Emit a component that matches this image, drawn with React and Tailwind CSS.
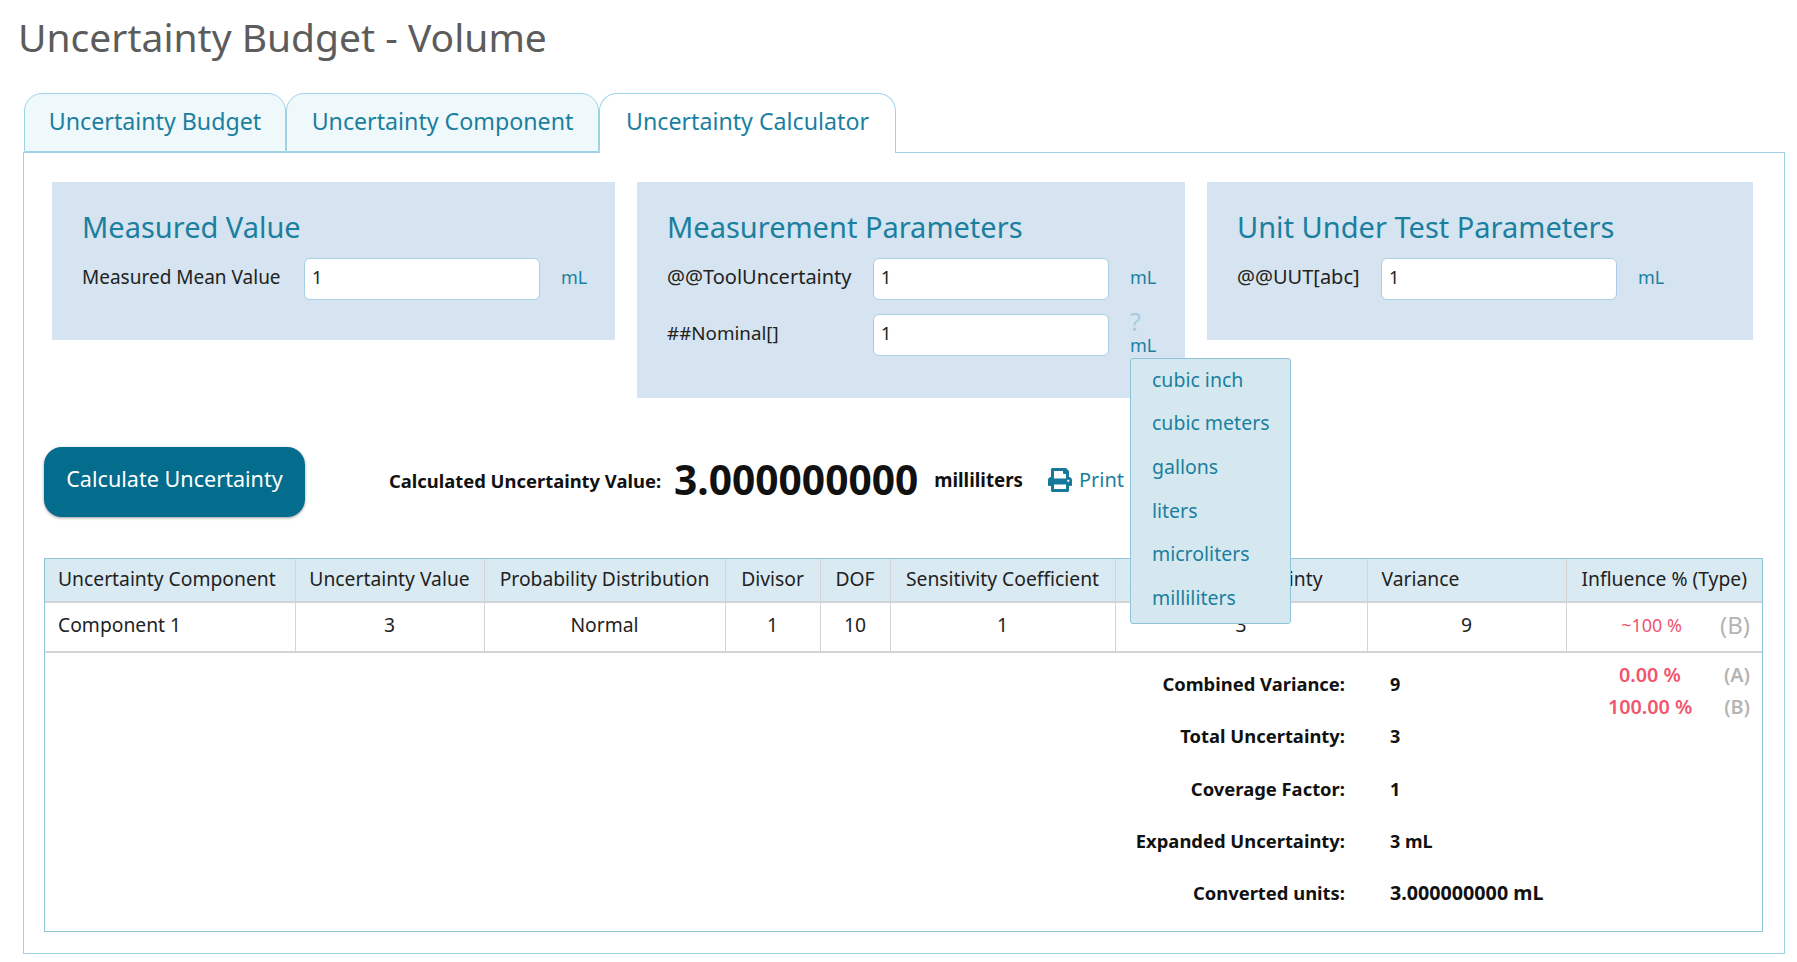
import React from 'react';
import { FaPrint } from 'react-icons/fa';

const units = ['cubic inch', 'cubic meters', 'gallons', 'liters', 'microliters', 'milliliters'];

const columns = [
  { name: 'Uncertainty Component', width: 'w-[250px]', value: 'Component 1', left: true },
  { name: 'Uncertainty Value', width: 'w-[189px]', value: '3' },
  { name: 'Probability Distribution', width: 'w-[241px]', value: 'Normal' },
  { name: 'Divisor', width: 'w-[95px]', value: '1' },
  { name: 'DOF', width: 'w-[70px]', value: '10' },
  { name: 'Sensitivity Coefficient', width: 'w-[225px]', value: '1' },
  { name: 'Standard Uncertainty', width: 'w-[252px]', value: '3', headLeft: true },
  { name: 'Variance', width: 'w-[199px]', value: '9', headLeft: true },
];

const summary = [
  ['Combined Variance:', '9'],
  ['Total Uncertainty:', '3'],
  ['Coverage Factor:', '1'],
  ['Expanded Uncertainty:', '3 mL'],
  ['Converted units:', '3.000000000 mL'],
];

function Field({ label, labelWidth, labelSize, hint }) {
  return (
    <div className="flex items-center h-[42px]">
      <label className={`${labelWidth} ${labelSize} shrink-0 text-[#222] relative -top-[2px]`}>{label}</label>
      <input
        defaultValue="1"
        className="w-[236px] h-[42px] rounded-[6px] bg-white border border-[#a9cfe2] pl-[7px] pb-[4px] text-[18px] text-[#222] outline-none"
      />
      <div className="ml-[21px] flex flex-col items-start text-[18px] leading-[24px] text-[#1b7f9f] relative -top-[2px]">
        {hint && <span className="text-[25px] leading-[24px] text-[#a5ccdc]">?</span>}
        <span>mL</span>
      </div>
    </div>
  );
}

function ParamBox({ title, width, height, children }) {
  return (
    <section className={`${width} ${height} shrink-0 bg-[#d5e4f0] pl-[30px] pt-[26px]`}>
      <h2 className="text-[29px] leading-[38px] text-[#1b7f9f] mb-[12px]">{title}</h2>
      <div className="flex flex-col gap-[14px]">{children}</div>
    </section>
  );
}

function Tab({ children, active, width }) {
  return (
    <div
      className={`${width} flex items-center justify-center rounded-t-[18px] border border-[#9ed3e6] text-[23.2px] text-[#1b7f9f] ${
        active ? 'bg-white border-b-0 h-[60px] -mb-[1px] pb-[5px] z-10' : 'h-[59px] pb-[3px] bg-[#eff8fb]'
      }`}
    >
      {children}
    </div>
  );
}

export default function App() {
  return (
    <div className="w-[1797px] h-[962px] bg-white font-['Noto_Sans',sans-serif] overflow-hidden">
      <h1 className="pl-[18px] pt-[13px] h-[93px] text-[39px] leading-[48px] text-[#5c5c5c]">Uncertainty Budget - Volume</h1>

      <div className="flex pl-[24px]">
        <Tab width="w-[262px]">Uncertainty Budget</Tab>
        <Tab width="w-[313px]">Uncertainty Component</Tab>
        <Tab width="w-[297px]" active>Uncertainty Calculator</Tab>
      </div>

      <main className="relative ml-[23px] w-[1762px] h-[802px] border border-[#9ed3e6] pt-[29px]">
        <div className="flex gap-[22px] pl-[28px] items-start">
          <ParamBox title="Measured Value" width="w-[563px]" height="h-[158px]">
            <Field label="Measured Mean Value" labelWidth="w-[222px]" labelSize="text-[19px]" />
          </ParamBox>
          <ParamBox title="Measurement Parameters" width="w-[548px]" height="h-[216px]">
            <Field label="@@ToolUncertainty" labelWidth="w-[206px]" labelSize="text-[20px]" />
            <Field label="##Nominal[]" labelWidth="w-[206px]" labelSize="text-[18.8px]" hint />
          </ParamBox>
          <ParamBox title="Unit Under Test Parameters" width="w-[546px]" height="h-[158px]">
            <Field label="@@UUT[abc]" labelWidth="w-[144px]" labelSize="text-[20px]" />
          </ParamBox>
        </div>

        <div className="flex items-center mt-[49px] pl-[20px]">
          <button className="w-[261px] h-[70px] rounded-[18px] bg-[#046c8c] text-white text-[21.6px] pb-[5px] shadow-[0_1px_3px_rgba(0,0,0,0.4)]">
            Calculate Uncertainty
          </button>
          <span className="ml-[84px] text-[18.4px] font-bold text-[#111] relative -top-[1px]">Calculated Uncertainty Value:</span>
          <span className="ml-[13px] text-[40.7px] font-bold text-[#111] relative -top-[2px]">3.000000000</span>
          <span className="ml-[16px] text-[18.7px] font-bold text-[#111] relative -top-[2px]">milliliters</span>
          <FaPrint className="ml-[25px] text-[#17799a] relative -top-[2px]" size={24} />
          <span className="ml-[7px] text-[20px] text-[#1b7f9f] relative -top-[2px]">Print</span>
        </div>

        <div className="mt-[41px] ml-[20px] w-[1719px] h-[374px] border border-[#8fc3d8]">
          <table className="w-full table-fixed border-collapse text-[19.3px] text-[#222]">
            <thead>
              <tr className="h-[43px] bg-[#d9eaf3]">
                {columns.map((col) => (
                  <th
                    key={col.name}
                    className={`${col.width} border-r border-b-2 border-[#d4d4d4] font-normal pb-[2px] whitespace-nowrap ${
                      col.left ? 'text-left pl-[13px]' : col.headLeft ? 'text-left pl-[14px]' : 'text-center px-[12px]'
                    }`}
                  >
                    {col.name}
                  </th>
                ))}
                <th className="border-b-2 border-[#d4d4d4] font-normal px-[12px] pb-[2px] text-center whitespace-nowrap">Influence % (Type)</th>
              </tr>
            </thead>
            <tbody>
              <tr className="h-[50px]">
                {columns.map((col) => (
                  <td
                    key={col.name}
                    className={`border-r border-b-2 border-[#d4d4d4] pb-[4px] ${col.left ? 'text-left pl-[13px]' : 'text-center px-[12px]'}`}
                  >
                    {col.value}
                  </td>
                ))}
                <td className="border-b-2 border-[#d4d4d4] pr-[12px] pb-[4px]">
                  <div className="flex justify-end items-center gap-[38px]">
                    <span className="text-[#f0566f] text-[18px]">~100 %</span>
                    <span className="text-[#b5b5b5] text-[24px] leading-[28px]">(B)</span>
                  </div>
                </td>
              </tr>
            </tbody>
          </table>

          <div className="flex">
            <div className="w-[1300px] shrink-0 pt-[18px] grid grid-cols-[1300px_auto] auto-rows-[52.25px] text-[18.4px] font-bold text-[#111]">
              {summary.map(([label, value]) => (
                <React.Fragment key={label}>
                  <div className="text-right leading-[26px]">{label}</div>
                  <div className={`pl-[45px] leading-[26px] whitespace-nowrap ${value.length > 5 ? 'text-[19.7px]' : 'text-[18px]'}`}>{value}</div>
                </React.Fragment>
              ))}
            </div>
            <div className="ml-auto pr-[12px] pt-[7px] flex flex-col gap-[2px] text-[19.8px] font-semibold">
              <div className="flex items-center justify-end">
                <span className="text-[#f0566f] w-[100px] text-center">0.00 %</span>
                <span className="text-[#b5b5b5] ml-[24px]">(A)</span>
              </div>
              <div className="flex items-center justify-end">
                <span className="text-[#f0566f] w-[100px] text-center">100.00 %</span>
                <span className="text-[#b5b5b5] ml-[24px]">(B)</span>
              </div>
            </div>
          </div>
        </div>

        {/* unit dropdown over the table */}
        <ul className="absolute left-[1106px] top-[205px] w-[161px] h-[266px] bg-[#d5e8ef] border border-[#8fc3d8] rounded-[3px] flex flex-col justify-center z-20">
          {units.map((unit) => (
            <li key={unit} className="pl-[21px] pb-[5px] h-[43.6px] flex items-center text-[19.5px] text-[#1b7f9f]">
              {unit}
            </li>
          ))}
        </ul>
      </main>
    </div>
  );
}
